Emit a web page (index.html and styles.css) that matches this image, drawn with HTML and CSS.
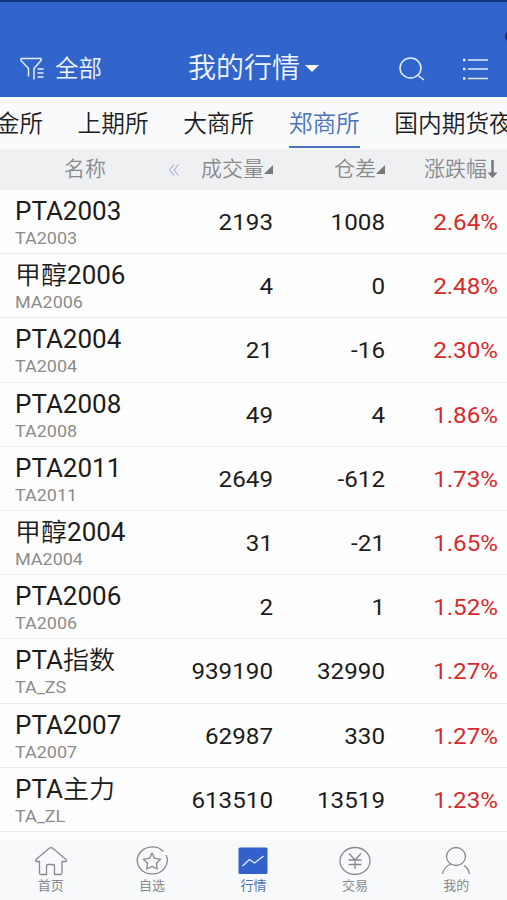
FILE: index.html
```html
<!DOCTYPE html>
<html lang="zh-CN">
<head>
    <meta charset="UTF-8">
    <meta name="viewport" content="width=device-width, initial-scale=1.0">
    <title>我的行情</title>
    <link rel="stylesheet" href="styles.css">
</head>
<body>

    <div class="header">
        <div class="filter">
            <svg class="filter-icon" width="25" height="24" viewBox="0 0 25 24">
                <path d="M14 22.500V11.500L21 3.500V1.500H1V3.500L8.500 11.500V19.500M17.500 12H23.500M17.500 16H23.500M17.500 20H23.500"/>
            </svg>
            <span>全部</span>
        </div>
        <div class="title"><span>我的行情</span><i class="caret"></i></div>
        <div class="actions">
            <svg width="26" height="24" viewBox="0 0 26 24">
                <ellipse cx="11.500" cy="11" rx="10.500" ry="10"/>
                <path d="M19 18.500L25 23"/>
            </svg>
            <svg width="26" height="24" viewBox="0 0 26 24">
                <path d="M6 3H26M6 12H26M6 21.500H26"/>
                <path class="dots" d="M1 3H3.500M1 12H3.500M1 21.500H3.500"/>
            </svg>
        </div>
        <i class="edge-dot"></i>
    </div>

    <div class="tabs">
        <span class="tab first">中金所</span>
        <span class="tab">上期所</span>
        <span class="tab">大商所</span>
        <span class="tab active">郑商所</span>
        <span class="tab">国内期货夜</span>
    </div>

    <div class="row columns">
        <div class="col-name">名称
            <svg class="back" width="12" height="12" viewBox="0 0 12 12"><path d="M6 .5L1.500 6L6 11.500M10.500 .5L6 6L10.500 11.500"/></svg>
        </div>
        <div class="col-volume">成交量<i class="corner"></i></div>
        <div class="col-diff">仓差<i class="corner"></i></div>
        <div class="col-change">涨跌幅<svg class="down" width="11" height="19" viewBox="0 0 11 19"><path class="shaft" d="M5.500 0V14"/><path class="tip" d="M.5 12.500H10.500L5.500 18Z"/></svg></div>
    </div>

    <div class="list">
        <div class="row item">
            <div class="col-name"><div class="name">PTA2003</div><div class="code">TA2003</div></div>
            <div class="col-volume num">2193</div><div class="col-diff num">1008</div><div class="col-change num up">2.64%</div>
        </div>
        <div class="row item">
            <div class="col-name"><div class="name"><span class="cn">甲醇</span>2006</div><div class="code">MA2006</div></div>
            <div class="col-volume num">4</div><div class="col-diff num">0</div><div class="col-change num up">2.48%</div>
        </div>
        <div class="row item">
            <div class="col-name"><div class="name">PTA2004</div><div class="code">TA2004</div></div>
            <div class="col-volume num">21</div><div class="col-diff num">-16</div><div class="col-change num up">2.30%</div>
        </div>
        <div class="row item">
            <div class="col-name"><div class="name">PTA2008</div><div class="code">TA2008</div></div>
            <div class="col-volume num">49</div><div class="col-diff num">4</div><div class="col-change num up">1.86%</div>
        </div>
        <div class="row item">
            <div class="col-name"><div class="name">PTA2011</div><div class="code">TA2011</div></div>
            <div class="col-volume num">2649</div><div class="col-diff num">-612</div><div class="col-change num up">1.73%</div>
        </div>
        <div class="row item">
            <div class="col-name"><div class="name"><span class="cn">甲醇</span>2004</div><div class="code">MA2004</div></div>
            <div class="col-volume num">31</div><div class="col-diff num">-21</div><div class="col-change num up">1.65%</div>
        </div>
        <div class="row item">
            <div class="col-name"><div class="name">PTA2006</div><div class="code">TA2006</div></div>
            <div class="col-volume num">2</div><div class="col-diff num">1</div><div class="col-change num up">1.52%</div>
        </div>
        <div class="row item">
            <div class="col-name"><div class="name">PTA<span class="cn">指数</span></div><div class="code">TA_ZS</div></div>
            <div class="col-volume num">939190</div><div class="col-diff num">32990</div><div class="col-change num up">1.27%</div>
        </div>
        <div class="row item">
            <div class="col-name"><div class="name">PTA2007</div><div class="code">TA2007</div></div>
            <div class="col-volume num">62987</div><div class="col-diff num">330</div><div class="col-change num up">1.27%</div>
        </div>
        <div class="row item">
            <div class="col-name"><div class="name">PTA<span class="cn">主力</span></div><div class="code">TA_ZL</div></div>
            <div class="col-volume num">613510</div><div class="col-diff num">13519</div><div class="col-change num up">1.23%</div>
        </div>
    </div>

    <div class="nav">
        <div class="nav-item">
            <svg width="34" height="30" viewBox="0 0 34 30"><path d="M15.200 2.300L2 13.500Q.8 15.500 3 15.500H5.500V27Q5.500 28.500 7 28.500H12.500V20.500Q12.500 18.500 14.500 18.500H18.500Q20.500 18.500 20.500 20.500V28.500H26.500Q28 28.500 28 27V15.500H31Q33.200 15.500 32 13.500L18.800 2.300Q17 1 15.200 2.300Z"/></svg>
            <span>首页</span>
        </div>
        <div class="nav-item">
            <svg width="34" height="30" viewBox="0 0 34 30"><path d="M28.500 5.500A15 13.500 0 1 0 31 9M28.500 5.500L26.500 4"/><path d="M17 7L19.700 12.300L25.500 13.200L21.400 17.300L22.300 23L17 20.400L11.700 23L12.600 17.300L8.500 13.200L14.300 12.300Z"/></svg>
            <span>自选</span>
        </div>
        <div class="nav-item current">
            <svg width="34" height="30" viewBox="0 0 34 30"><rect x="2.500" y="1.500" width="29" height="26.500" rx="1.500"/><path d="M6.500 20L13.500 13.500L18.500 17L27.500 10"/></svg>
            <span>行情</span>
        </div>
        <div class="nav-item">
            <svg width="34" height="30" viewBox="0 0 34 30"><ellipse cx="17" cy="15" rx="15" ry="13.500"/><path d="M11 7.500L17 14L23 7.500M17 14V23M10.500 14H23.500M10.500 18.500H23.500"/></svg>
            <span>交易</span>
        </div>
        <div class="nav-item">
            <svg width="34" height="30" viewBox="0 0 34 30"><ellipse cx="17" cy="10.500" rx="9.500" ry="9"/><path d="M3.500 28Q5 20.500 12 18M25 19.500Q29.500 22 30.500 28"/></svg>
            <span>我的</span>
        </div>
    </div>

</body>
</html>
```
FILE: styles.css
```css
* {
    box-sizing: border-box;
}

body {
    width: 507px;
    height: 900px;
    margin: 0;
    overflow: hidden;
    display: flex;
    flex-direction: column;
    background-color: #fefefe;
    color: #1c1c1c;
    font-family: Roboto, "Noto Sans CJK SC", sans-serif;
}

svg {
    display: block;
    flex: none;
    fill: none;
    stroke-linejoin: round;
}

.header {
    position: relative;
    flex: none;
    height: 97px;
    padding: 38px 19px 0 20px;
    border-top: 2px solid #15387f;
    background-color: #3265cc;
    color: #eef5ff;
    display: grid;
    grid-template-columns: 168px 1fr 89px;
    align-items: center;
    overflow: hidden;
}

.header svg {
    stroke: #e3edff;
    stroke-width: 1.5;
}

.header .dots {
    stroke-width: 2.5;
}

/* Вырез камеры у правого края */
.edge-dot {
    position: absolute;
    top: 30px;
    right: -6px;
    width: 8px;
    height: 9px;
    border-radius: 50%;
    background-color: #12295c;
}

.filter {
    display: flex;
    align-items: center;
    gap: 10px;
    font-size: 23.5px;
    font-weight: 350;
}

.filter span {
    line-height: 34px;
}

.title {
    display: flex;
    align-items: center;
    font-size: 28px;
    line-height: 36px;
    font-weight: 350;
}

.title span {
    padding-top: 1px;
}

.caret {
    margin-left: 5px;
    border: 7px solid transparent;
    border-top-color: #ffffff;
    border-bottom: 0;
}

.actions {
    display: flex;
    justify-content: space-between;
}

/* Вкладки */
.tabs {
    flex: none;
    height: 52px;
    background-color: #f9fafc;
    display: flex;
    gap: 34.5px;
    overflow: hidden;
    font-size: 23.7px;
    line-height: 54px;
    white-space: nowrap;
    font-weight: 350;
}

.tab {
    flex: none;
    height: 51px;
}

.tab.first {
    margin-left: -28px;
}

.tab.active {
    color: #4a72bd;
    border-bottom: 2px solid #4a72bd;
}

.row {
    display: grid;
    grid-template-columns: 162px 111px 112px 122px;
}

.columns {
    flex: none;
    height: 41px;
    background-color: #eff0f2;
    color: #88898b;
    font-size: 21px;
    line-height: 43px;
    font-weight: 350;
}

.columns > div {
    height: 41px;
    display: flex;
    align-items: center;
    justify-content: flex-end;
}

.columns .col-name {
    gap: 62px;
    margin-right: -18px;
}

.back {
    stroke: #8c9dcb;
}

.corner {
    width: 9px;
    height: 9px;
    background-color: #77787a;
    clip-path: polygon(100% 0, 100% 100%, 0 100%);
}

.columns .col-change {
    padding-right: 9px;
}

.down .shaft {
    stroke: #77787a;
    stroke-width: 2.5;
}

.down .tip {
    fill: #77787a;
}

.list {
    flex: none;
    height: 649px;
}

.item {
    height: 64.2px;
    border-bottom: 1px solid #ebecee;
}

.item .col-name {
    padding: 8px 0 0 15px;
}

.name {
    font-size: 25px;
    line-height: 28px;
    transform: scaleX(1.04);
    transform-origin: left;
}

.cn {
    font-weight: 350;
}

.code {
    font-size: 17.2px;
    line-height: 25px;
    color: #8b8b8b;
    transform: scaleX(1.045);
    transform-origin: left;
}

.num {
    font-size: 22.2px;
    line-height: 65px;
    text-align: right;
    transform: scaleX(1.09);
    transform-origin: right;
}

.item .col-change {
    margin-right: 9px;
}

.up {
    color: #d62a2a;
}

.nav {
    flex: 1;
    padding-top: 7px;
    background-color: #f7f9fb;
    display: grid;
    grid-template-columns: repeat(5, 1fr);
}

.nav-item {
    display: flex;
    flex-direction: column;
    align-items: center;
    font-size: 13px;
    line-height: 19px;
    color: #88898d;
}

.nav-item svg {
    stroke: #88898d;
    stroke-width: 1.3;
}

.nav-item.current {
    color: #4a6fbd;
}

.current rect {
    fill: #3261cc;
    stroke: none;
}

.nav-item.current path {
    stroke: #e5efff;
}
```
